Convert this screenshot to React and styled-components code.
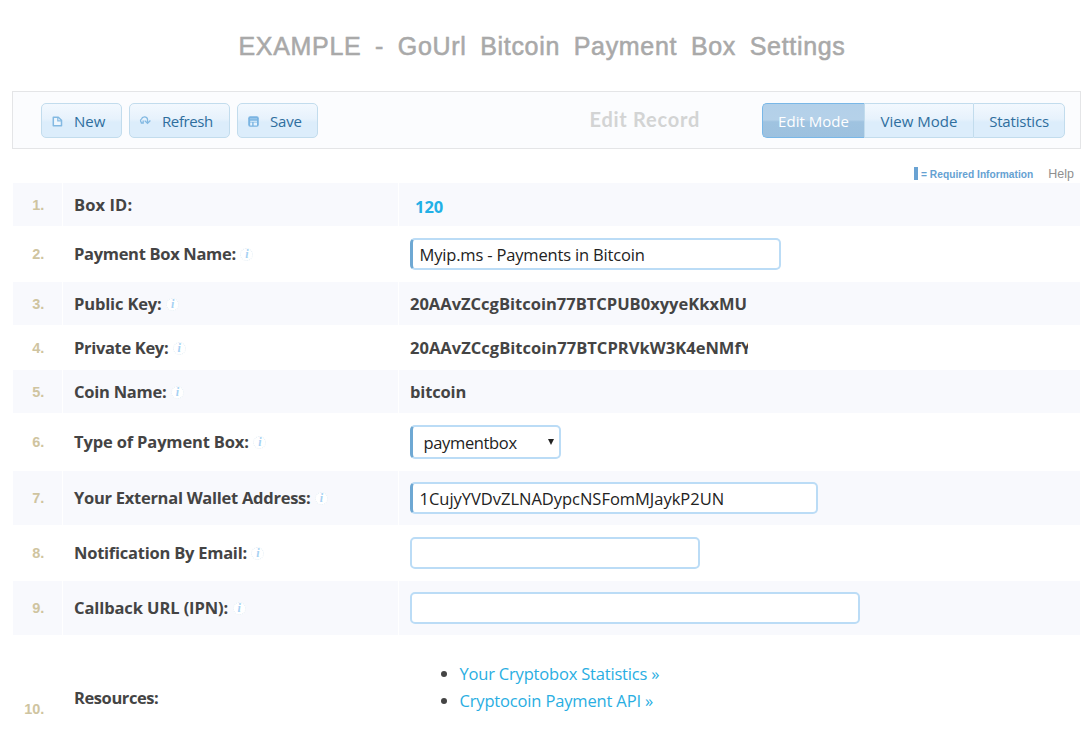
import React from "react";
import styled, { createGlobalStyle, css } from "styled-components";

const GlobalStyle = createGlobalStyle`
  * { box-sizing: border-box; }
  html, body { margin: 0; height: 749px; overflow: hidden; background: #fff; }
  body { font-family: "Open Sans", "Noto Sans", sans-serif; color: #444; }
`;

const Page = styled.main`
  width: 1083px;
  height: 749px;
  overflow: hidden;
  padding: 0 2px 0 12px;
`;

const Title = styled.h1`
  margin: 0;
  height: 91px;
  padding: 32px 0 0 226.5px;
  font: 400 25px/29px "Liberation Sans", Arial, sans-serif;
  letter-spacing: 0.68px;
  word-spacing: 6.1px;
  -webkit-text-stroke: 0.55px #a9a9a9;
  color: #a9a9a9;
  white-space: nowrap;
`;

const Toolbar = styled.div`
  display: flex;
  align-items: center;
  height: 58px;
  padding: 0 15px 0 28px;
  border: 1px solid #e4e5e7;
  background: #fbfcfe;
`;

const Actions = styled.div`
  display: flex;
  gap: 7px;
`;

const blueSurface = css`
  border: 1px solid #c2dced;
  background: linear-gradient(#f2f8fe, #e7f2fc 45%, #dcedfb 55%, #dcedfb);
  color: #2e6e9e;
  font: 400 15px/33px "Open Sans", "Noto Sans", sans-serif;
`;

const ActionButton = styled.button`
  ${blueSurface}
  display: flex;
  align-items: center;
  width: ${(p) => p.$width}px;
  height: 35px;
  padding: 2px 0 0 9px;
  border-radius: 5px;
  letter-spacing: ${(p) => p.$ls || 0}px;

  svg { width: 13px; height: 13px; margin: 0 10px 0 0; flex: none; }
`;

const RecordTitle = styled.h2`
  margin: -2px 0 0 auto;
  width: 172.5px;
  font: 700 20px/24px Lato, "Century Gothic", sans-serif;
  letter-spacing: 0.75px;
  color: #d3d4d4;
`;

const Modes = styled.div`
  display: flex;
`;

const ModeButton = styled.button`
  ${blueSurface}
  width: ${(p) => p.$width}px;
  height: 35px;
  padding: 1px 0 0;
  border-right-width: 0;
  letter-spacing: ${(p) => p.$ls || 0}px;

  &:first-child { border-radius: 5px 0 0 5px; }
  &:last-child { border-radius: 0 5px 5px 0; border-right-width: 1px; }

  ${(p) => p.$active && css`
    border-color: #79b7e7;
    background: linear-gradient(#b3d0e9, #b5d1e9 48%, #9fc3e0 54%, #9dc1df);
    color: #fff;
  `}
`;

const Legend = styled.div`
  display: flex;
  justify-content: flex-end;
  align-items: center;
  height: 34px;
  padding: 15px 7px 0 0;
`;

const RequiredBar = styled.span`
  width: 4px;
  height: 13px;
  margin-right: 3px;
  background: #6aa3d3;
`;

const RequiredText = styled.span`
  padding-top: 2px;
  font: 700 10.2px/14px "Liberation Sans", Arial, sans-serif;
  letter-spacing: 0.02px;
  color: #65a1d2;
`;

const Help = styled.span`
  margin-left: 15px;
  font: 400 12.5px/14px "Liberation Sans", Arial, sans-serif;
  color: #8f8f8f;
`;

const Row = styled.div`
  display: grid;
  grid-template-columns: 49px 335px 681px;
  column-gap: 1px;
  height: ${(p) => p.$height}px;
  margin-left: 1px;
`;

const Cell = styled.div`
  display: flex;
  align-items: center;
  background: ${(p) => (p.$shaded ? "#f8f9fd" : "#fff")};
  white-space: nowrap;
`;

const NumberCell = styled(Cell)`
  justify-content: flex-end;
  padding: ${(p) => p.$drop || 0}px 17.7px 0 0;
  font: 700 14.5px/16px "Liberation Sans", Arial, sans-serif;
  color: #cfc4a0;
`;

const LabelCell = styled(Cell)`
  padding-left: 11px;
`;

const ValueCell = styled(Cell)`
  padding-left: 11px;
`;

const Strong = styled.span`
  font-weight: 700;
  font-size: 16.5px;
  line-height: 22px;
  letter-spacing: ${(p) => p.$ls || 0}px;
`;

const Key = styled(Strong)`
  width: 338px;
  overflow: hidden;
`;

const BoxId = styled(Strong)`
  padding: 5px 0 0 5px;
  color: #22b0e6;
`;

const Info = styled.i`
  width: 13px;
  height: 13px;
  margin: 1px 0 0 4.5px;
  border: 1px dotted #e3eef5;
  border-radius: 50%;
  background: #fff;
  color: #a6d1f3;
  font: italic 700 12px/11px "Liberation Serif", serif;
  text-align: center;
`;

const field = css`
  width: ${(p) => p.$width}px;
  border: 2px solid #bbdcf6;
  border-radius: 5px;
  background: #fff;
  color: #222;
  font: 400 16.5px/22px "Open Sans", "Noto Sans", sans-serif;
  letter-spacing: ${(p) => p.$ls || 0}px;
  ${(p) => p.$required && css`border-left: 3px solid #6ea8d3;`}
`;

const TextField = styled.input`
  ${field}
  height: 32px;
  padding: 0 6px 0 6.5px;
  outline: none;
`;

const SelectField = styled.div`
  ${field}
  display: flex;
  align-items: center;
  justify-content: space-between;
  height: 34px;
  padding: 1px 5px 0 10.5px;

  svg { width: 6px; height: 6px; margin-top: -2px; }
`;

const Links = styled.ul`
  align-self: flex-start;
  margin: 0;
  padding: 25px 0 0 49.5px;
  list-style: none;
  font-size: 16.5px;
  line-height: 27px;
`;

const LinkItem = styled.li`
  display: flex;
  align-items: center;
  letter-spacing: ${(p) => p.$ls}px;
  color: #29aee2;

  &::before {
    content: "";
    width: 6px;
    height: 6px;
    margin: 0 13px 0 -19px;
    border-radius: 50%;
    background: #444;
  }
`;

const NewIcon = () => (
  <svg viewBox="0 0 13 13" fill="none" stroke="#83b9e2" strokeWidth="1.5">
    <path d="M2.3 2.3h5l3.2 3v5.4H2.3z" fill="#eef6fd" strokeLinejoin="round" />
    <path d="M6.8 2.5v3.4h3.5" strokeWidth="1.2" />
  </svg>
);

const RefreshIcon = () => (
  <svg viewBox="0 0 13 13" fill="none" stroke="#83b9e2" strokeWidth="1.3">
    <path d="M2.8 7.6C1 6.9 1.2 4.6 2.5 4 3.2 1.3 7.8.9 8.5 4.2v3" />
    <path d="M1.8 8h2.4V5.6M5.7 5.6l2.8 2.7 2.9-2.7" />
  </svg>
);

const SaveIcon = () => (
  <svg viewBox="0 0 13 13">
    <rect x="1.2" y="1.2" width="10.6" height="10.6" rx="2" fill="#7ab4e2" />
    <path d="M3 3.8h7" stroke="#a9d0ef" strokeWidth="0.9" />
    <path d="M3.2 5.8h6.8v1H3.2zM3.2 7.6h2v2.9h-2zM6.6 7.6H10v2.9H6.6z" fill="#e6f3fd" />
  </svg>
);

const ROWS = [
  { label: "Box ID:", ls: 0.1, height: 43, value: <BoxId>120</BoxId> },
  { label: "Payment Box Name:", ls: -0.31, height: 56, info: true,
    value: <TextField $width={371} $required $ls={-0.17} defaultValue="Myip.ms - Payments in Bitcoin" /> },
  { label: "Public Key:", ls: -0.15, height: 43, info: true,
    value: <Key $ls={0}>20AAvZCcgBitcoin77BTCPUB0xyyeKkxMU</Key> },
  { label: "Private Key:", ls: -0.33, height: 45, info: true,
    value: <Key $ls={0.03}>20AAvZCcgBitcoin77BTCPRVkW3K4eNMfY</Key> },
  { label: "Coin Name:", ls: -0.25, height: 43, info: true, value: <Strong $ls={-0.15}>bitcoin</Strong> },
  { label: "Type of Payment Box:", ls: -0.15, height: 58, info: true,
    value: (
      <SelectField $width={151} $required $ls={-0.35}>
        paymentbox
        <svg viewBox="0 0 6 6"><path d="M0 0h6L3 6z" fill="#222" /></svg>
      </SelectField>
    ) },
  { label: "Your External Wallet Address:", ls: -0.27, height: 54, info: true,
    value: <TextField $width={408} $required $ls={-0.02} defaultValue="1CujyYVDvZLNADypcNSFomMJaykP2UN" /> },
  { label: "Notification By Email:", ls: -0.24, height: 56, info: true, value: <TextField $width={290} /> },
  { label: "Callback URL (IPN):", ls: -0.1, height: 54, info: true, value: <TextField $width={450} /> },
  { label: "Resources:", ls: -0.42, height: 126, drop: 22,
    value: (
      <Links>
        <LinkItem $ls={-0.19}>Your Cryptobox Statistics »</LinkItem>
        <LinkItem $ls={-0.16}>Cryptocoin Payment API »</LinkItem>
      </Links>
    ) },
];

export default function App() {
  return (
    <Page>
      <GlobalStyle />
      <Title>EXAMPLE - GoUrl Bitcoin Payment Box Settings</Title>
      <Toolbar>
        <Actions>
          <ActionButton $width={81}><NewIcon />New</ActionButton>
          <ActionButton $width={101} $ls={-0.4}><RefreshIcon />Refresh</ActionButton>
          <ActionButton $width={81} $ls={-0.15}><SaveIcon />Save</ActionButton>
        </Actions>
        <RecordTitle>Edit Record</RecordTitle>
        <Modes>
          <ModeButton $width={102} $ls={0.02} $active>Edit Mode</ModeButton>
          <ModeButton $width={109}>View Mode</ModeButton>
          <ModeButton $width={92} $ls={-0.2}>Statistics</ModeButton>
        </Modes>
      </Toolbar>
      <Legend>
        <RequiredBar />
        <RequiredText>= Required Information</RequiredText>
        <Help>Help</Help>
      </Legend>
      {ROWS.map((row, i) => (
        <Row key={row.label} $height={row.height}>
          <NumberCell $shaded={i % 2 === 0} $drop={row.drop}>{i + 1}.</NumberCell>
          <LabelCell $shaded={i % 2 === 0}>
            <Strong $ls={row.ls}>{row.label}</Strong>
            {row.info && <Info>i</Info>}
          </LabelCell>
          <ValueCell $shaded={i % 2 === 0}>{row.value}</ValueCell>
        </Row>
      ))}
    </Page>
  );
}
